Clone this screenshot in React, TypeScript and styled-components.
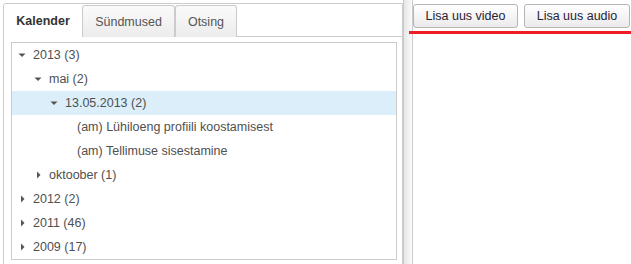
import React from 'react'
import styled, { createGlobalStyle } from 'styled-components'

const GlobalStyle = createGlobalStyle`
html, body {
  margin: 0;
  padding: 0;
  background: #ffffff;
  overflow: hidden;
}
body {
  font-family: "Liberation Sans", Arial, sans-serif;
}
`

type NodeState = 'open' | 'closed' | 'leaf'

interface TreeNode {
  label: string
  level: number
  state: NodeState
  selected?: boolean
}

const tree: TreeNode[] = [
  { label: '2013 (3)', level: 0, state: 'open' },
  { label: 'mai (2)', level: 1, state: 'open' },
  { label: '13.05.2013 (2)', level: 2, state: 'open', selected: true },
  { label: '(am) Lühiloeng profiili koostamisest', level: 3, state: 'leaf' },
  { label: '(am) Tellimuse sisestamine', level: 3, state: 'leaf' },
  { label: 'oktoober (1)', level: 1, state: 'closed' },
  { label: '2012 (2)', level: 0, state: 'closed' },
  { label: '2011 (46)', level: 0, state: 'closed' },
  { label: '2009 (17)', level: 0, state: 'closed' }
]

const tabs = [
  { label: 'Kalender', width: 78 },
  { label: 'Sündmused', width: 93 },
  { label: 'Otsing', width: 62 }
]

const Arrow = ({ state }: { state: NodeState }) => {
  if (state === 'leaf') return <LeafSpace />
  return (
    <ArrowBox>
      {state === 'open' ? (
        <svg width='8' height='8' viewBox='0 0 8 8'>
          <path d='M0.5 2.5 L7.5 2.5 L4 6 Z' fill='#555' />
        </svg>
      ) : (
        <svg width='8' height='8' viewBox='0 0 8 8'>
          <path d='M3 0.5 L6.5 4 L3 7.5 Z' fill='#555' />
        </svg>
      )}
    </ArrowBox>
  )
}

const App = () => {
  return (
    <>
      <GlobalStyle />
      <Page>
        <LeftPanel>
          <TabNav>
            {tabs.map((t, i) => (
              <Tab key={t.label} active={i === 0} tabWidth={t.width}>{t.label}</Tab>
            ))}
          </TabNav>
          <TabBody>
            <TreeBox>
              {tree.map(node => (
                <Row key={node.label} level={node.level} selected={!!node.selected}>
                  <Arrow state={node.state} />
                  <Label>{node.label}</Label>
                </Row>
              ))}
            </TreeBox>
          </TabBody>
        </LeftPanel>
        <Splitter />
        <RightPanel>
          <Toolbar>
            <Button type='button' btnWidth={105}>Lisa uus video</Button>
            <Button type='button' btnWidth={106}>Lisa uus audio</Button>
          </Toolbar>
          <RedLine />
        </RightPanel>
      </Page>
    </>
  )
}

const Page = styled.div`
display: flex;
align-items: stretch;
width: 631px;
height: 264px;
`

const LeftPanel = styled.div`
margin: 3px 0 0 3px;
width: 398px;
height: 270px;
border: 1px solid #cbcbcb;
border-top-left-radius: 3px;
background: #ffffff;
flex-shrink: 0;
`

const TabNav = styled.div`
display: flex;
height: 32px;
border-bottom: 1px solid #cbcbcb;
`

interface TabProps {
  active: boolean
  tabWidth: number
}

const Tab = styled.div<TabProps>`
box-sizing: border-box;
width: ${(p) => p.tabWidth}px;
height: ${(p) => p.active ? '33px' : '32px'};
margin-top: ${(p) => p.active ? '0' : '1px'};
display: flex;
align-items: center;
justify-content: center;
font-size: 12.5px;
font-weight: ${(p) => p.active ? 'bold' : 'normal'};
color: ${(p) => p.active ? '#333333' : '#555555'};
background: ${(p) => p.active ? '#ffffff' : 'linear-gradient(#fafafa, #ececec)'};
border: ${(p) => p.active ? 'none' : '1px solid #cbcbcb'};
border-bottom: none;
border-radius: 3px 3px 0 0;
white-space: nowrap;
`

const TabBody = styled.div`
padding: 5px 5px 0 7px;
`

const TreeBox = styled.div`
border: 1px solid #cbcbcb;
width: 384px;
height: 216px;
overflow: hidden;
`

interface RowProps {
  level: number
  selected: boolean
}

const Row = styled.div<RowProps>`
display: flex;
align-items: center;
height: 24px;
padding-left: ${(p) => 6 + p.level * 16}px;
background: ${(p) => p.selected ? '#dbeef9' : 'transparent'};
`

const ArrowBox = styled.span`
width: 15px;
height: 8px;
display: flex;
align-items: center;
flex-shrink: 0;
`

const LeafSpace = styled.span`
width: 11px;
flex-shrink: 0;
`

const Label = styled.span`
font-size: 12.5px;
color: #505050;
white-space: nowrap;
`

const Splitter = styled.div`
width: 8px;
flex-shrink: 0;
border-left: 1px solid #cbcbcb;
border-right: 1px solid #cbcbcb;
background: linear-gradient(to right, #e6e6e6, #fbfbfb);
`

const RightPanel = styled.div`
flex: 1;
padding-top: 4px;
`

const Toolbar = styled.div`
display: flex;
gap: 6px;
`

const Button = styled.button<{ btnWidth: number }>`
box-sizing: border-box;
width: ${(p) => p.btnWidth}px;
height: 24px;
padding: 0;
white-space: nowrap;
font-family: "Liberation Sans", Arial, sans-serif;
font-size: 12.5px;
color: #2a2233;
background: linear-gradient(#ffffff, #ebebeb);
border: 1px solid #b5b5b5;
border-radius: 3px;
cursor: pointer;
`

const RedLine = styled.div`
margin: 3px 0 0 -4px;
height: 3px;
width: 222px;
background: #ee1c25;
`

export default App
